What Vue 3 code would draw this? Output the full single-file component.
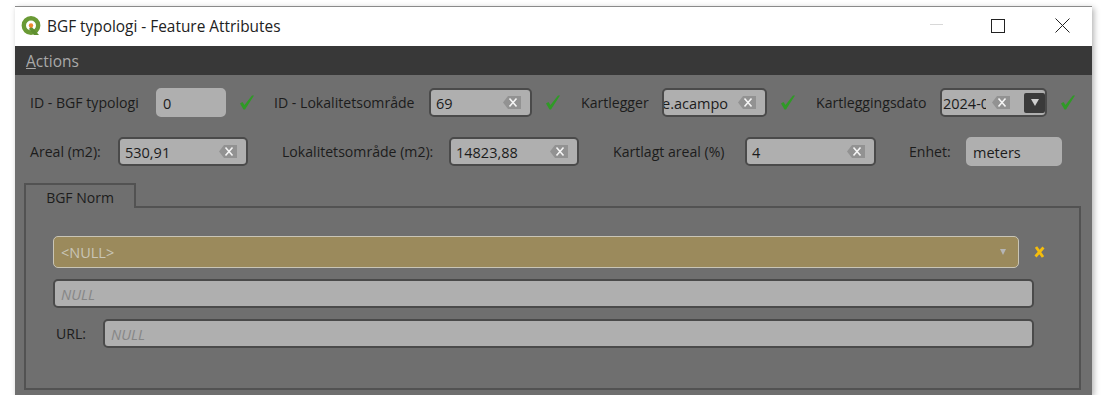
<script setup>
const firstRow = [
  { label: "ID - BGF typologi", labelW: 112, value: "0", width: 70, ok: true, readonly: true, gap: 20 },
  { label: "ID - Lokalitetsområde", labelW: 141, value: "69", width: 103, ok: true, clear: true, gap: 21 },
  { label: "Kartlegger", labelW: 67, value: "e.acampo", width: 105, ok: true, clear: true, gap: 21, cut: true },
];
const secondRow = [
  { label: "Areal (m2):", labelW: 74, value: "530,91", width: 130, clear: true, gap: 34 },
  { label: "Lokalitetsområde (m2):", labelW: 153, value: "14823,88", width: 130, clear: true, gap: 34 },
  { label: "Kartlagt areal (%)", labelW: 118, value: "4", width: 131, clear: true, gap: 33 },
  { label: "Enhet:", labelW: 43, value: "meters", width: 96, readonly: true, gap: 0 },
];
</script>

<template>
  <div class="window">
    <div class="titlebar">
      <svg class="logo" width="21" height="21" viewBox="0 0 21 21">
        <circle cx="10" cy="9.500" r="7.200" fill="none" stroke="#6a9a35" stroke-width="4.400" />
        <path d="M10 10l8 9h-5l-5-6z" fill="#5f9030" />
        <circle cx="10" cy="9.500" r="2.200" fill="#ee8a30" />
      </svg>
      <span class="title">BGF typologi - Feature Attributes</span>
      <div class="controls">
        <svg class="min" width="14" height="14" viewBox="0 0 14 14"><path d="M0 7.500h13" stroke="#d8d8d8" /></svg>
        <svg width="14" height="14" viewBox="0 0 14 14"><rect x="0.500" y="0.500" width="13" height="13" fill="none" stroke="#222" /></svg>
        <svg width="15" height="15" viewBox="0 0 15 15"><path d="M.5.5l14 14M14.500.5l-14 14" stroke="#222" /></svg>
      </div>
    </div>
    <div class="menubar"><span><u>A</u>ctions</span></div>
    <div class="body">
      <div class="row first">
        <div class="field" v-for="f in firstRow" :key="f.label" :style="{ marginRight: f.gap + 'px' }">
          <label :style="{ width: f.labelW + 'px' }">{{ f.label }}</label>
          <div class="input" :class="{ readonly: f.readonly }" :style="{ width: f.width + 'px' }">
            <span class="val" :class="{ cut: f.cut }">{{ f.value }}</span>
            <svg v-if="f.clear" class="clear" width="18" height="13" viewBox="0 0 18 13">
              <path d="M0 6.500l5-6.500h13v13H5z" fill="#929292" />
              <path d="M6.500 2.500l7 8M13.500 2.500l-7 8" stroke="#f4f4f4" stroke-width="1.600" />
            </svg>
          </div>
          <svg class="check" width="14" height="15" viewBox="0 0 14 15"><path d="M0 8.500l2.500-1.500 2 3L12 .5h2L5 14.500H3.500z" fill="#2f9a26" /></svg>
        </div>
        <div class="field">
          <label style="width: 110px">Kartleggingsdato</label>
          <div class="input date">
            <span class="val">2024-0</span>
            <svg class="clear" width="18" height="13" viewBox="0 0 18 13">
              <path d="M0 6.500l5-6.500h13v13H5z" fill="#929292" />
              <path d="M6.500 2.500l7 8M13.500 2.500l-7 8" stroke="#f4f4f4" stroke-width="1.600" />
            </svg>
            <span class="drop"><i></i></span>
          </div>
          <svg class="check" width="14" height="15" viewBox="0 0 14 15"><path d="M0 8.500l2.500-1.500 2 3L12 .5h2L5 14.500H3.500z" fill="#2f9a26" /></svg>
        </div>
      </div>
      <div class="row second">
        <div class="field" v-for="f in secondRow" :key="f.label" :style="{ marginRight: f.gap + 'px' }">
          <label :style="{ width: f.labelW + 'px' }">{{ f.label }}</label>
          <div class="input" :class="{ readonly: f.readonly }" :style="{ width: f.width + 'px' }">
            <span class="val">{{ f.value }}</span>
            <svg v-if="f.clear" class="clear" width="18" height="13" viewBox="0 0 18 13">
              <path d="M0 6.500l5-6.500h13v13H5z" fill="#929292" />
              <path d="M6.500 2.500l7 8M13.500 2.500l-7 8" stroke="#f4f4f4" stroke-width="1.600" />
            </svg>
          </div>
        </div>
      </div>
      <div class="tabs">
        <div class="tab">BGF Norm</div>
        <div class="pane">
          <div class="combo-row">
            <div class="combo">
              <span>&lt;NULL&gt;</span>
              <i class="arrow"></i>
            </div>
            <svg class="cross" width="11" height="12" viewBox="0 0 11 12"><path d="M2 1l7 10M9.500 1.500L1.500 10.500" stroke="#f5bd0c" stroke-width="2.800" /></svg>
          </div>
          <div class="input wide"><em>NULL</em></div>
          <div class="url-row">
            <label>URL:</label>
            <div class="input wide"><em>NULL</em></div>
          </div>
        </div>
      </div>
    </div>
  </div>
</template>

<style>
html, body {
  background: #fff;
}
</style>

<style scoped>
.window {
  width: 1077px;
  height: 388px;
  margin: 6px 0 0 15px;
  border-top: 1px solid #8a8a8a;
  box-shadow: 2px 2px 6px rgba(0, 0, 0, 0.3);
  display: flex;
  flex-direction: column;
  font-family: "Open Sans", "Noto Sans", sans-serif;
  font-size: 14.100px;
  color: #1c1c1c;
}

.titlebar {
  height: 39px;
  background: #fff;
  display: flex;
  align-items: center;
  padding-left: 6px;
}

.logo {
  margin-right: 5px;
  flex: none;
}

.title {
  font-size: 15.400px;
  color: #222;
}

.controls {
  margin-left: auto;
  margin-right: 22px;
  margin-bottom: 2px;
  display: flex;
  align-items: center;
  gap: 50px;
}

.min {
  margin-right: -3px;
  margin-bottom: 3px;
}

.menubar {
  height: 29px;
  background: #383838;
  color: #a9a9a9;
  display: flex;
  align-items: center;
  padding-left: 11px;
  font-size: 15.500px;
}

.body {
  flex: 1;
  background: #6f6f6f;
  padding: 13px 0 0 15px;
}

.row {
  display: flex;
  align-items: center;
}

.second {
  margin-top: 20px;
}

.field {
  display: flex;
  align-items: center;
}

label {
  white-space: nowrap;
  margin-right: 14px;
}

.input {
  height: 29px;
  box-sizing: border-box;
  background: #afafaf;
  border: 2px solid #4a4a4a;
  border-radius: 5px;
  display: flex;
  align-items: center;
  padding: 0 5px;
  overflow: hidden;
}

.input.readonly {
  border-color: #afafaf;
}

.val {
  white-space: nowrap;
  padding-top: 2px;
  font-size: 14.500px;
}

.val.cut {
  margin-left: -7px;
}

.clear {
  margin-left: auto;
  margin-right: 4px;
  flex: none;
}

.check {
  margin-left: 14px;
  flex: none;
}

.date {
  width: 107px;
  padding: 0 0 0 1px;
}

.date .val {
  width: 43px;
  flex: none;
  overflow: hidden;
}

.date .clear {
  margin-left: 6px;
  margin-right: 14px;
}

.drop {
  width: 21px;
  height: 20px;
  background: #3a3a3a;
  border-radius: 2px;
  display: flex;
  align-items: center;
  justify-content: center;
  flex: none;
}

.drop i {
  border-left: 4px solid transparent;
  border-right: 4px solid transparent;
  border-top: 7px solid #cfcfcf;
}

.tabs {
  margin: 17px 0 0 -6px;
  width: 1057px;
}

.tab {
  width: 112px;
  height: 25px;
  box-sizing: border-box;
  border: 2px solid #525252;
  border-bottom: none;
  text-align: center;
  line-height: 25px;
  font-size: 14px;
  position: relative;
  z-index: 1;
  background: #6f6f6f;
  margin-bottom: -2px;
}

.pane {
  height: 184px;
  box-sizing: border-box;
  border: 2px solid #525252;
  padding: 28px 45px 0 27px;
}

.combo-row {
  display: flex;
  align-items: center;
  margin-bottom: 11px;
}

.combo {
  width: 966px;
  height: 32px;
  flex: none;
  box-sizing: border-box;
  background: #9b8a5c;
  border: 1.500px solid #c9c5b6;
  border-radius: 5px;
  color: #c9c5b6;
  display: flex;
  align-items: center;
  justify-content: space-between;
  padding: 0 12px 0 7px;
  font-size: 14.500px;
}

.arrow {
  border-left: 3.500px solid transparent;
  border-right: 3.500px solid transparent;
  border-top: 6px solid #b5b5b5;
}

.cross {
  margin-left: 15px;
  flex: none;
}

.wide {
  flex: 1;
}

.input em {
  color: #868686;
  padding: 2px 0 0 1px;
  font-size: 14.500px;
}

.url-row {
  display: flex;
  align-items: center;
  margin-top: 11px;
  padding-left: 3px;
}

.url-row label {
  width: 33px;
}
</style>
